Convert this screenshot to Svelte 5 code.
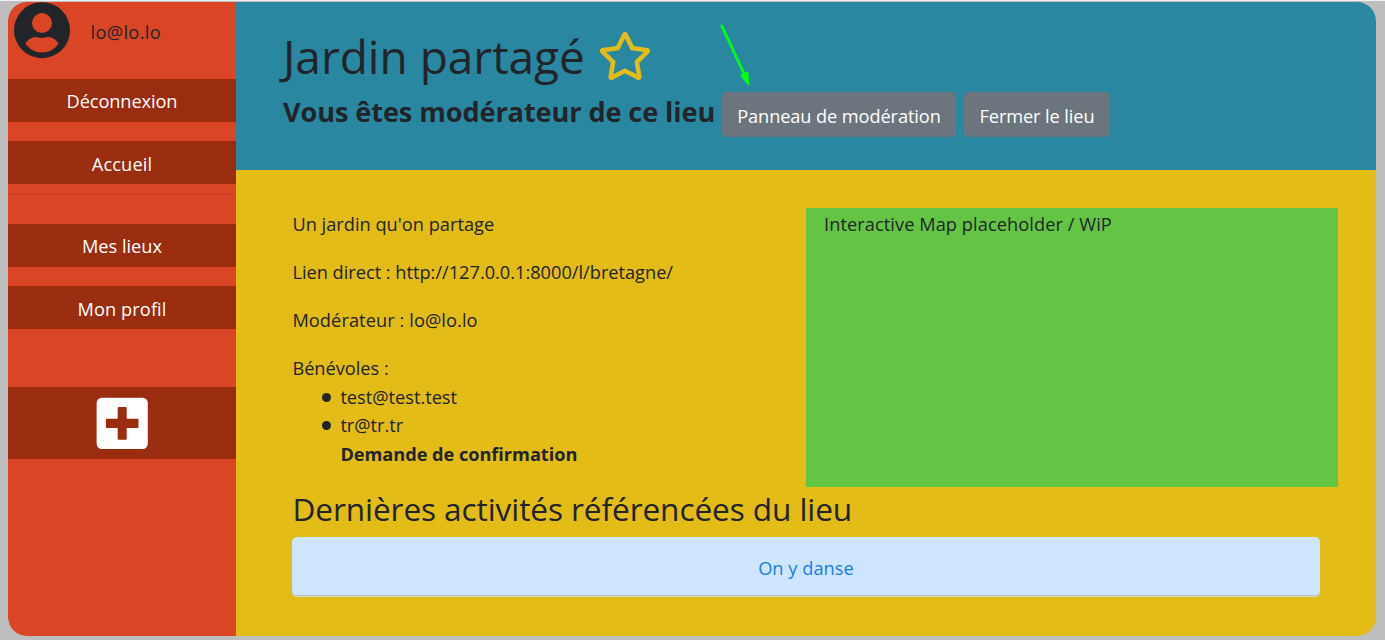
<script>
  const nav = [
    { label: 'Déconnexion', cls: 'logout' },
    { label: 'Accueil', cls: 'home' },
    { label: 'Mes lieux', cls: 'places' },
    { label: 'Mon profil', cls: 'profile' }
  ];
  const volunteers = ['test@test.test', 'tr@tr.tr'];
</script>

<div class="page">
  <div class="shell">
    <aside class="sidebar">
      <div class="user">
        <svg class="avatar" viewBox="0 0 56 56" aria-hidden="true">
          <circle cx="28" cy="28.200" r="28" fill="#212529" />
          <circle cx="28" cy="21" r="10" fill="#da4526" />
          <path d="M11.500 41.700C13.500 38 17.500 35 22 35c2 0 3.500 .9 6 .9s4-.9 6-.9c4.500 0 8.500 3 10.500 6.700C40.500 47.400 34.700 50.400 28 50.400S15.500 47.400 11.500 41.700z" fill="#da4526" />
        </svg>
        <span class="email">lo@lo.lo</span>
      </div>
      <nav>
        {#each nav.slice(0, 2) as item}
          <a class={item.cls} href="#top">{item.label}</a>
        {/each}
        <hr />
        {#each nav.slice(2) as item}
          <a class={item.cls} href="#top">{item.label}</a>
        {/each}
        <a class="add" href="#top" aria-label="+">
          <svg width="52" height="52" viewBox="0 0 52 52" aria-hidden="true">
            <rect x=".6" y=".7" width="51.200" height="51.200" rx="5.200" fill="#fff" />
            <path d="M22.700 9.900h7q1 0 1 1v10.800h10.800q1 0 1 1v7.200q0 1-1 1H30.700v10.800q0 1-1 1h-7q-1 0-1-1V30.900H10.900q-1 0-1-1v-7.200q0-1 1-1H21.700V10.900q0-1 1-1z" fill="#9a2c10" />
          </svg>
        </a>
      </nav>
    </aside>

    <main>
      <header>
        <div class="title">
          <h1>Jardin partagé</h1>
          <svg width="54" height="48" viewBox="0 0 576 512" aria-hidden="true">
            <path fill="#e3bc18" d="M528.1 171.5L382 150.2 316.7 17.8c-11.700-23.600-45.600-23.900-57.400 0L194 150.2 47.900 171.500c-26.200 3.800-36.700 36.100-17.700 54.600l105.700 103-25 145.500c-4.500 26.300 23.200 46 46.400 33.700L288 439.600l130.700 68.700c23.200 12.200 50.900-7.400 46.400-33.700l-25-145.500 105.700-103c19-18.500 8.500-50.800-17.700-54.600zM388.600 312.300l23.700 138.400L288 385.400l-124.300 65.300 23.700-138.400-100.600-98 139-20.200 62.200-126 62.200 126 139 20.200-100.600 98z" />
          </svg>
        </div>
        <div class="moderation">
          <h2>Vous êtes modérateur de ce lieu</h2>
          <button class="panel">Panneau de modération</button>
          <button class="close">Fermer le lieu</button>
        </div>
        <svg class="arrow" width="36" height="68" viewBox="718 21 36 68" aria-hidden="true">
          <path d="M721.800 26L744.500 74.500" stroke="#00ff12" stroke-width="2.900" stroke-linecap="round" />
          <path d="M749.300 86.300L739.700 75.300L748.300 71.500z" fill="#00ff12" />
        </svg>
      </header>

      <section class="content">
        <div class="columns">
          <div class="info">
            <p class="desc">Un jardin qu'on partage</p>
            <p>Lien direct : http://127.0.0.1:8000/l/bretagne/</p>
            <p class="mod">Modérateur : lo@lo.lo</p>
            <div class="vol">Bénévoles :</div>
            <ul>
              {#each volunteers as v}
                <li>{v}</li>
              {/each}
            </ul>
            <strong>Demande de confirmation</strong>
          </div>
          <div class="map">Interactive Map placeholder / WiP</div>
        </div>
        <h3>Dernières activités référencées du lieu</h3>
        <a class="activity" href="#top">On y danse</a>
      </section>
    </main>
  </div>
</div>

<style>
  :global(body) {
    margin: 0;
    background: #bebebe;
  }
  .page {
    box-sizing: border-box;
    height: 640px;
    padding: 1px 9px 4px 8px;
    border-top: 1px solid #f0f1f1;
    overflow: hidden;
    font: 400 18.2px/28.8px "Open Sans", "Noto Sans", sans-serif;
    color: #212529;
  }
  .shell {
    display: flex;
    height: 634px;
    border-radius: 19.2px;
    overflow: hidden;
  }
  a {
    text-decoration: none;
  }
  h1, h2, h3, p, ul {
    margin: 0;
    padding: 0;
  }
  .sidebar {
    width: 228px;
    flex: none;
    background: #da4526;
  }
  .user {
    display: flex;
    align-items: flex-start;
    height: 77px;
  }
  .avatar {
    width: 56px;
    height: 56px;
    margin-left: 6px;
    overflow: visible;
  }
  .email {
    margin: 16px 0 0 20.5px;
    letter-spacing: .36px;
  }
  nav {
    display: flex;
    flex-direction: column;
  }
  nav a {
    box-sizing: border-box;
    height: 43px;
    padding-top: 8px;
    margin-bottom: 19px;
    background: #9a2c10;
    color: #fff;
    text-align: center;
  }
  nav .logout {
    letter-spacing: -.08px;
  }
  nav .home {
    margin-bottom: 10px;
    letter-spacing: .15px;
    padding-top: 9px;
  }
  nav .profile {
    margin-bottom: 58px;
    letter-spacing: .1px;
    padding-top: 9px;
  }
  hr {
    width: 100%;
    height: 1px;
    margin: 0 0 29px;
    border: 0;
    background: rgba(0, 0, 0, .1);
  }
  nav .add {
    display: flex;
    justify-content: center;
    height: 72px;
    padding: 10px 0 0;
    margin: 0;
  }
  main {
    flex: 1;
    display: flex;
    flex-direction: column;
  }
  header {
    position: relative;
    box-sizing: border-box;
    height: 168px;
    padding: 25px 47px 0;
    background: #2a87a2;
  }
  .title {
    display: flex;
    height: 65px;
    gap: 13px;
  }
  .title svg {
    margin-top: 5px;
  }
  h1 {
    font-size: 46px;
    line-height: 58px;
    font-weight: 400;
    white-space: nowrap;
  }
  .moderation {
    display: flex;
    align-items: flex-start;
  }
  h2 {
    width: 439px;
    flex: none;
    font-size: 27.1px;
    line-height: 40px;
    font-weight: 700;
    white-space: nowrap;
    letter-spacing: -.08px;
  }
  button {
    height: 45px;
    padding: 3px 0 0;
    border: 0;
    border-radius: 5px;
    background: #6c757d;
    color: #fff;
    font: inherit;
    letter-spacing: -.09px;
  }
  .panel {
    width: 234px;
    margin-right: 8px;
  }
  .close {
    width: 146px;
  }
  .arrow {
    position: absolute;
    left: 482px;
    top: 19px;
  }
  .content {
    flex: 1;
    padding: 38px 38px 0 56px;
    background: #e3bc18;
  }
  .columns {
    display: flex;
    height: 279px;
  }
  .info {
    width: 514px;
    flex: none;
    padding-top: 2px;
    box-sizing: border-box;
    padding-left: .4px;
  }
  .info p {
    margin-bottom: 19.2px;
  }
  .desc {
    letter-spacing: .02px;
  }
  .mod {
    letter-spacing: .09px;
  }
  ul {
    list-style: none;
  }
  li {
    display: flex;
    align-items: center;
    height: 28.5px;
  }
  li::before {
    content: '';
    width: 9px;
    height: 9px;
    margin: 0 9.5px 0 29.5px;
    border-radius: 50%;
    background: #212529;
  }
  strong {
    display: block;
    padding-left: 48px;
    letter-spacing: -.04px;
  }
  .map {
    flex: 1;
    box-sizing: border-box;
    padding: 2px 18px;
    background: #63c543;
    letter-spacing: .08px;
  }
  h3 {
    font-size: 31.6px;
    line-height: 40px;
    font-weight: 400;
    padding: 2px 0 0 .5px;
    height: 48px;
    white-space: nowrap;
    letter-spacing: -.1px;
  }
  .activity {
    display: block;
    box-sizing: border-box;
    width: 1028px;
    height: 60px;
    padding-top: 17px;
    border-radius: 5px;
    background: #cfe5ff;
    box-shadow: inset 0 -1px #dcd9b9, inset 0 -2px #b9c3c6;
    color: #137dec;
    text-align: center;
    letter-spacing: .05px;
  }
</style>
